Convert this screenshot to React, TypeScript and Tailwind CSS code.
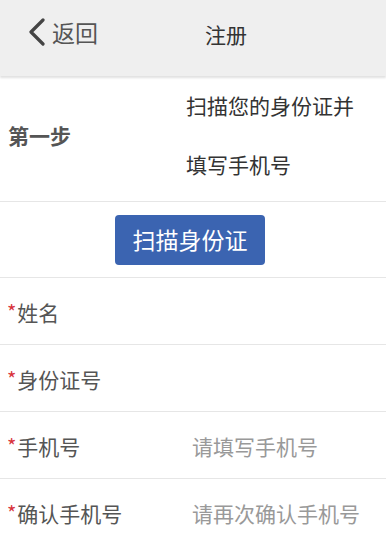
export default function App() {
  const rows = [
    { label: "姓名", placeholder: "" },
    { label: "身份证号", placeholder: "" },
    { label: "手机号", placeholder: "请填写手机号" },
    { label: "确认手机号", placeholder: "请再次确认手机号" },
  ]

  return (
    <div
      className="min-h-screen bg-white text-[#555]"
      style={{ fontFamily: '"Noto Sans CJK SC", "Noto Sans", sans-serif' }}
    >
      {/* 顶部导航 */}
      <div className="flex h-[76px] items-start bg-[#efefef] pt-[18px] shadow-[0_2px_2px_rgba(0,0,0,0.12)]">
        <div className="flex items-center pl-[26px]">
          <svg width="22" height="28" viewBox="0 0 22 28" fill="none">
            <path d="M17 2 L5 14 L17 26" stroke="#444" strokeWidth="3.2" strokeLinecap="round" strokeLinejoin="round" />
          </svg>
          <span className="ml-[4px] text-[23px] leading-none text-[#555]">返回</span>
        </div>
        <span className="ml-[107px] mt-[6px] text-[21px] leading-none text-[#333]">注册</span>
      </div>

      {/* 第一步 */}
      <div className="mt-[2px] flex h-[124px] items-center border-b border-[#e6e6e6] pb-[8px]">
        <div className="w-[186px] pl-[8px] text-[21px] font-semibold text-[#555]">第一步</div>
        <div className="flex flex-col text-[21px] text-[#333]">
          <div className="flex h-[59px] items-center">扫描您的身份证并</div>
          <div className="flex h-[59px] items-center">填写手机号</div>
        </div>
      </div>

      {/* 扫描按钮 */}
      <div className="flex h-[76px] items-center justify-center border-b border-[#e6e6e6] pr-[6px]">
        <button className="flex h-[50px] w-[150px] items-center justify-center rounded-[4px] bg-[#3b64b1] text-[23px] text-white">
          扫描身份证
        </button>
      </div>

      {/* 表单 */}
      {rows.map((row) => (
        <div key={row.label} className="flex h-[67px] items-center border-b border-[#e6e6e6] pt-[3px]">
          <div className="flex w-[192px] items-center pl-[7px]">
            <span className="mr-[1px] mt-[-2px] text-[20px] leading-none text-[#d8343c]">*</span>
            <span className="text-[21px] text-[#555]">{row.label}</span>
          </div>
          <span className="text-[21px] text-[#999]">{row.placeholder}</span>
        </div>
      ))}
    </div>
  )
}
